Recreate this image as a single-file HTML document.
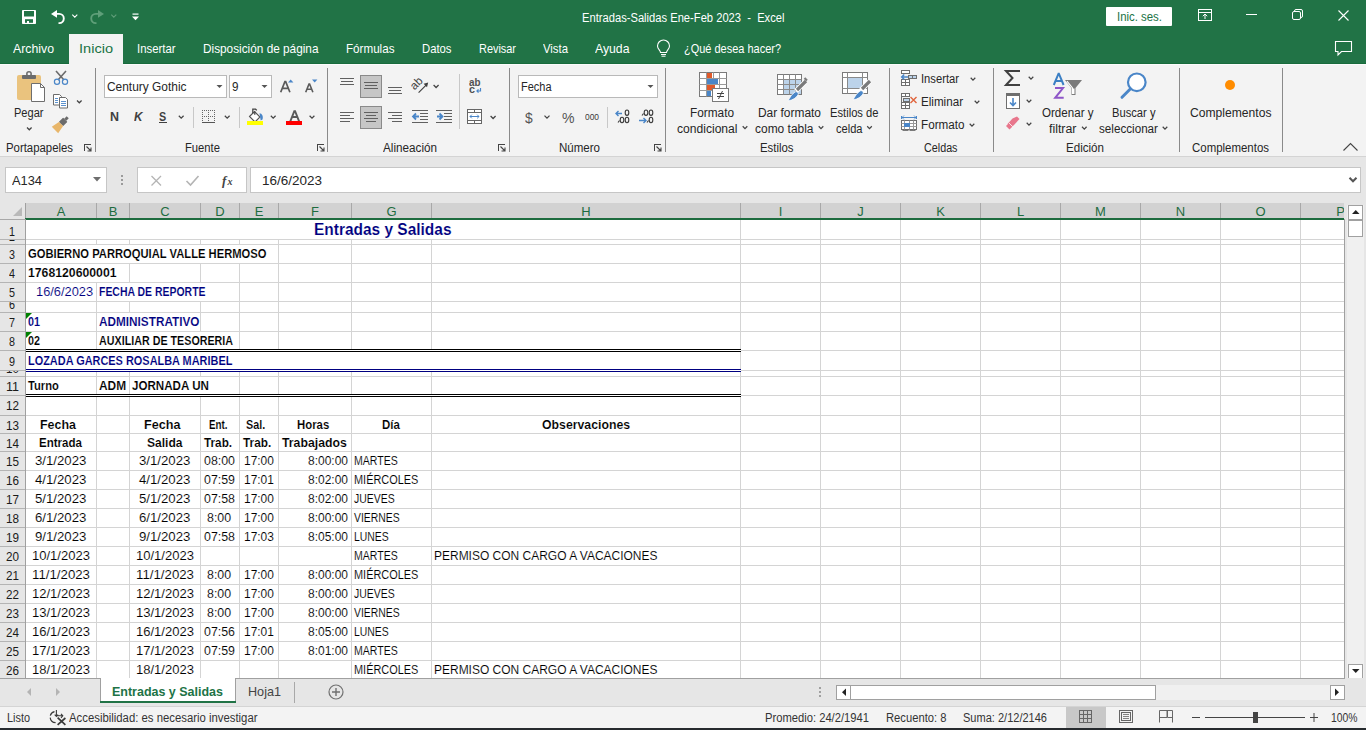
<!DOCTYPE html><html><head><meta charset="utf-8"><title>Excel</title><style>*{margin:0;padding:0;box-sizing:border-box}
html,body{width:1366px;height:730px;overflow:hidden;background:#f3f3f3;font-family:"Liberation Sans",sans-serif;position:relative}
.a{position:absolute}
.t{position:absolute;white-space:nowrap;line-height:1;transform-origin:0 0}
.s{position:absolute;overflow:visible}
</style></head><body><div class="a" style="left:0px;top:0px;width:1366px;height:63px;background:#217346"></div>
<div class="a" style="left:0px;top:63px;width:1366px;height:1px;background:#186b3c"></div>
<div class="a" style="left:0px;top:64px;width:1366px;height:1px;background:#fbfbfb"></div>
<div class="a" style="left:69px;top:34px;width:54px;height:31px;background:#f3f3f3"></div>
<svg class="s" style="left:0;top:0" width="1366" height="730" viewBox="0 0 1366 730"><rect x="22" y="10" width="14" height="14" rx="0.8" fill="#fff"/><rect x="24" y="11" width="10" height="5.5" fill="#217346"/><rect x="25" y="19.2" width="8" height="3.6" fill="#217346"/><rect x="27" y="21" width="2" height="2" fill="#fff"/></svg>
<svg class="s" style="left:0;top:0" width="1366" height="730" viewBox="0 0 1366 730"><path d="M51 13.9l6-3.8v7.6z" fill="#fff"/><path d="M56 13.9h3.2a4.6 4.6 0 0 1 0 9.2h-0.7" fill="none" stroke="#fff" stroke-width="1.9"/></svg>
<svg class="s" style="left:0;top:0" width="1366" height="730" viewBox="0 0 1366 730"><path d="M72.3 14.6l2.5 2.5 2.5-2.5" fill="none" stroke="#fff" stroke-width="1.1"/></svg>
<svg class="s" style="left:0;top:0" width="1366" height="730" viewBox="0 0 1366 730"><path d="M104 13.9l-6-3.8v7.6z" fill="#5f9f79"/><path d="M99 13.9h-3.2a4.6 4.6 0 0 0 0 9.2h0.7" fill="none" stroke="#5f9f79" stroke-width="1.9"/></svg>
<svg class="s" style="left:0;top:0" width="1366" height="730" viewBox="0 0 1366 730"><path d="M111.3 14.6l2.5 2.5 2.5-2.5" fill="none" stroke="#5f9d78" stroke-width="1.1"/></svg>
<svg class="s" style="left:132px;top:13px;" width="7" height="8" viewBox="0 0 7 8"><rect x="0.5" y="0.5" width="6" height="1.2" fill="#fff"/><path d="M0 3.5h7l-3.5 3.8z" fill="#fff"/></svg>
<div class="t" style="top:11.84px;font-size:12px;color:#fff;font-weight:normal;left:582.0px;transform:scaleX(0.9312);">Entradas-Salidas Ene-Feb 2023&nbsp;&nbsp;-&nbsp;&nbsp;Excel</div>
<div class="a" style="left:1106px;top:7px;width:66px;height:19px;background:#fff;border-radius:1px"></div>
<div class="t" style="top:10.84px;font-size:12px;color:#217346;font-weight:normal;left:1116.5px;transform:scaleX(0.9502);">Inic. ses.</div>
<svg class="s" style="left:1198px;top:9px;" width="14" height="12" viewBox="0 0 14 12"><rect x="0.5" y="0.5" width="13" height="11" fill="none" stroke="#fff" stroke-width="1"/><path d="M0.5 3.5h13" stroke="#fff"/><path d="M7 10V5M4.8 7.2L7 5l2.2 2.2" fill="none" stroke="#fff" stroke-width="1"/></svg>
<div class="a" style="left:1246px;top:14px;width:11px;height:1px;background:#fff"></div>
<svg class="s" style="left:1292px;top:9px;" width="11" height="11" viewBox="0 0 11 11"><rect x="0.5" y="2.5" width="8" height="8" rx="1.5" fill="none" stroke="#fff"/><path d="M2.5 2.5v-0.5a1.5 1.5 0 0 1 1.5-1.5h5a1.5 1.5 0 0 1 1.5 1.5v5a1.5 1.5 0 0 1-1.5 1.5h-0.5" fill="none" stroke="#fff"/></svg>
<svg class="s" style="left:1338px;top:10px;" width="11" height="11" viewBox="0 0 11 11"><path d="M0.5 0.5l10 10M10.5 0.5l-10 10" stroke="#fff" stroke-width="1.1"/></svg>
<div class="t" style="top:42.00px;font-size:13px;color:#fff;font-weight:normal;left:12.5px;transform:scaleX(0.9456);">Archivo</div>
<div class="t" style="top:42.00px;font-size:13px;color:#217346;font-weight:normal;left:78.5px;transform:scaleX(1.1199);">Inicio</div>
<div class="t" style="top:42.00px;font-size:13px;color:#fff;font-weight:normal;left:137.0px;transform:scaleX(0.8734);">Insertar</div>
<div class="t" style="top:42.00px;font-size:13px;color:#fff;font-weight:normal;left:203.0px;transform:scaleX(0.9080);">Disposición de página</div>
<div class="t" style="top:42.00px;font-size:13px;color:#fff;font-weight:normal;left:346.0px;transform:scaleX(0.8950);">Fórmulas</div>
<div class="t" style="top:42.00px;font-size:13px;color:#fff;font-weight:normal;left:422.0px;transform:scaleX(0.8684);">Datos</div>
<div class="t" style="top:42.00px;font-size:13px;color:#fff;font-weight:normal;left:479.0px;transform:scaleX(0.8394);">Revisar</div>
<div class="t" style="top:42.00px;font-size:13px;color:#fff;font-weight:normal;left:542.5px;transform:scaleX(0.8719);">Vista</div>
<div class="t" style="top:42.00px;font-size:13px;color:#fff;font-weight:normal;left:594.5px;transform:scaleX(0.9416);">Ayuda</div>
<svg class="s" style="left:656px;top:41px;" width="15" height="16" viewBox="0 0 15 16"><path d="M4.5 11.5c0-2-3-3.5-3-6.5a6 6 0 0 1 12 0c0 3-3 4.5-3 6.5z" fill="none" stroke="#fff" stroke-width="1.1"/><path d="M5 13.5h5M5.5 15.2h4" stroke="#fff" stroke-width="1"/></svg>
<div class="t" style="top:42.00px;font-size:13px;color:#fff;font-weight:normal;left:684.0px;transform:scaleX(0.8442);">¿Qué desea hacer?</div>
<svg class="s" style="left:1335px;top:41px;" width="17" height="15" viewBox="0 0 17 15"><path d="M0.5 0.5h16v10h-10l-3.5 3.5v-3.5h-2.5z" fill="none" stroke="#fff" stroke-width="1.1"/></svg>
<div class="a" style="left:0px;top:156px;width:1366px;height:1px;background:#d4d4d4"></div>
<div class="a" style="left:95px;top:68px;width:1px;height:84px;background:#8a8a8a"></div>
<div class="a" style="left:327px;top:68px;width:1px;height:84px;background:#8a8a8a"></div>
<div class="a" style="left:509px;top:68px;width:1px;height:84px;background:#8a8a8a"></div>
<div class="a" style="left:665px;top:68px;width:1px;height:84px;background:#8a8a8a"></div>
<div class="a" style="left:889px;top:68px;width:1px;height:84px;background:#8a8a8a"></div>
<div class="a" style="left:993px;top:68px;width:1px;height:84px;background:#8a8a8a"></div>
<div class="a" style="left:1179px;top:68px;width:1px;height:84px;background:#8a8a8a"></div>
<div class="a" style="left:1282px;top:68px;width:1px;height:84px;background:#8a8a8a"></div>
<div class="t" style="top:141.84px;font-size:12px;color:#262626;font-weight:normal;left:5.5px;transform:scaleX(0.9474);">Portapapeles</div>
<div class="t" style="top:141.84px;font-size:12px;color:#262626;font-weight:normal;left:185.0px;transform:scaleX(0.9368);">Fuente</div>
<div class="t" style="top:141.84px;font-size:12px;color:#262626;font-weight:normal;left:382.5px;transform:scaleX(0.9752);">Alineación</div>
<div class="t" style="top:141.84px;font-size:12px;color:#262626;font-weight:normal;left:558.5px;transform:scaleX(0.9605);">Número</div>
<div class="t" style="top:141.84px;font-size:12px;color:#262626;font-weight:normal;left:760.0px;transform:scaleX(0.9478);">Estilos</div>
<div class="t" style="top:141.84px;font-size:12px;color:#262626;font-weight:normal;left:924.0px;transform:scaleX(0.8967);">Celdas</div>
<div class="t" style="top:141.84px;font-size:12px;color:#262626;font-weight:normal;left:1066.0px;transform:scaleX(0.9655);">Edición</div>
<div class="t" style="top:141.84px;font-size:12px;color:#262626;font-weight:normal;left:1191.5px;transform:scaleX(0.9541);">Complementos</div>
<svg class="s" style="left:84px;top:144px;" width="8" height="8" viewBox="0 0 8 8"><path d="M0 0.5h7M0.5 0v7" stroke="#444" stroke-width="1"/><path d="M2.5 2.5l4.5 4.5M3.5 7h3.5v-3.5" fill="none" stroke="#444" stroke-width="1.1"/></svg>
<svg class="s" style="left:317px;top:144px;" width="8" height="8" viewBox="0 0 8 8"><path d="M0 0.5h7M0.5 0v7" stroke="#444" stroke-width="1"/><path d="M2.5 2.5l4.5 4.5M3.5 7h3.5v-3.5" fill="none" stroke="#444" stroke-width="1.1"/></svg>
<svg class="s" style="left:498px;top:144px;" width="8" height="8" viewBox="0 0 8 8"><path d="M0 0.5h7M0.5 0v7" stroke="#444" stroke-width="1"/><path d="M2.5 2.5l4.5 4.5M3.5 7h3.5v-3.5" fill="none" stroke="#444" stroke-width="1.1"/></svg>
<svg class="s" style="left:654px;top:144px;" width="8" height="8" viewBox="0 0 8 8"><path d="M0 0.5h7M0.5 0v7" stroke="#444" stroke-width="1"/><path d="M2.5 2.5l4.5 4.5M3.5 7h3.5v-3.5" fill="none" stroke="#444" stroke-width="1.1"/></svg>
<svg class="s" style="left:1343px;top:143px;" width="15" height="8" viewBox="0 0 15 8"><path d="M0.5 7.5l7-7 7 7" fill="none" stroke="#444" stroke-width="1.1"/></svg>
<svg class="s" style="left:0;top:0" width="1366" height="730" viewBox="0 0 1366 730">
<rect x="17" y="75" width="24" height="25" rx="2" fill="#eac37e"/>
<rect x="22" y="75" width="14" height="4" rx="1" fill="#6b6b6b"/>
<circle cx="29" cy="74" r="2.2" fill="none" stroke="#6b6b6b" stroke-width="1.5"/>
<path d="M31.5 83.5h9l4 4v14h-13z" fill="#fff" stroke="#6e6e6e" stroke-width="1"/>
<path d="M40.5 83.5v4h4" fill="none" stroke="#6e6e6e" stroke-width="1"/>
<path d="M56 71l8 9M66 71l-8 9" stroke="#6b6b6b" stroke-width="1.6"/>
<circle cx="57" cy="81.8" r="2.6" fill="none" stroke="#4a86c8" stroke-width="1.2"/>
<circle cx="65" cy="81.8" r="2.6" fill="none" stroke="#4a86c8" stroke-width="1.2"/>
<path d="M53.5 94.5h6l2 2v8.5h-8z" fill="#fff" stroke="#6b6b6b"/>
<path d="M59.5 97.5h6l2 2v8.5h-8z" fill="#fff" stroke="#6b6b6b"/>
<path d="M55 98.5h3M55 100.5h3M55 102.5h3M61 101.5h5M61 103.5h5M61 105.5h5" stroke="#4a86c8" stroke-width="0.9"/>
<path d="M77 100.5l2.3 2.3 2.3-2.3" fill="none" stroke="#444" stroke-width="1.25"/>
<path d="M27 127.5l2.3 2.3 2.3-2.3" fill="none" stroke="#444" stroke-width="1.25"/>
<g transform="rotate(-45 61 124)"><rect x="67" y="122.5" width="3.5" height="3" fill="#6b6b6b"/><rect x="61" y="121" width="6" height="6" rx="0.5" fill="#6b6b6b"/><path d="M61 121l-8.5-1.5v9l8.5-1.5z" fill="#e8b66a"/></g>
</svg>
<div class="t" style="top:106.84px;font-size:12px;color:#262626;font-weight:normal;left:14.0px;transform:scaleX(0.9210);">Pegar</div>
<div class="a" style="left:104px;top:75px;width:123px;height:23px;background:#fff;border:1px solid #b9b9b9"></div>
<div class="a" style="left:229px;top:75px;width:43px;height:23px;background:#fff;border:1px solid #b9b9b9"></div>
<div class="t" style="top:80.84px;font-size:12px;color:#262626;font-weight:normal;left:107.0px;transform:scaleX(0.9932);">Century Gothic</div>
<div class="t" style="top:80.84px;font-size:12px;color:#262626;font-weight:normal;left:231.5px;transform:scaleX(0.9720);">9</div>
<svg class="s" style="left:0;top:0" width="1366" height="730" viewBox="0 0 1366 730">
<path d="M216.5 85h6l-3 3z" fill="#555"/>
<path d="M261.5 85h6l-3 3z" fill="#555"/>
<path d="M280.7 92.2l4.2-10.6h0.8l4.2 10.6M282.4 88.4h5.8" fill="none" stroke="#5a5a5a" stroke-width="1.7"/>
<path d="M288 82.5l2.7-3 2.7 3z" fill="#4a86c8"/>
<path d="M305.7 92.2l3.3-8.2h0.6l3.3 8.2M307.1 89.2h4.5" fill="none" stroke="#5a5a5a" stroke-width="1.6"/>
<path d="M312 79.5h5.4l-2.7 3z" fill="#4a86c8"/>
<path d="M178.8 115.8l2.4 2.4 2.4-2.4" fill="none" stroke="#444" stroke-width="1.25"/>
<path d="M224.8 115.8l2.4 2.4 2.4-2.4" fill="none" stroke="#444" stroke-width="1.25"/>
<path d="M270.8 115.8l2.4 2.4 2.4-2.4" fill="none" stroke="#444" stroke-width="1.25"/>
<path d="M309.6 115.8l2.4 2.4 2.4-2.4" fill="none" stroke="#444" stroke-width="1.25"/>
<rect x="193" y="107" width="1" height="21" fill="#c8c8c8"/>
<rect x="239" y="107" width="1" height="21" fill="#c8c8c8"/>
<rect x="202" y="110" width="1" height="1" fill="#666"/><rect x="202" y="116" width="1" height="1" fill="#666"/><rect x="204" y="110" width="1" height="1" fill="#666"/><rect x="204" y="116" width="1" height="1" fill="#666"/><rect x="206" y="110" width="1" height="1" fill="#666"/><rect x="206" y="116" width="1" height="1" fill="#666"/><rect x="208" y="110" width="1" height="1" fill="#666"/><rect x="208" y="116" width="1" height="1" fill="#666"/><rect x="210" y="110" width="1" height="1" fill="#666"/><rect x="210" y="116" width="1" height="1" fill="#666"/><rect x="212" y="110" width="1" height="1" fill="#666"/><rect x="212" y="116" width="1" height="1" fill="#666"/><rect x="214" y="110" width="1" height="1" fill="#666"/><rect x="214" y="116" width="1" height="1" fill="#666"/><rect x="202" y="112" width="1" height="1" fill="#666"/><rect x="208" y="112" width="1" height="1" fill="#666"/><rect x="214" y="112" width="1" height="1" fill="#666"/><rect x="202" y="114" width="1" height="1" fill="#666"/><rect x="208" y="114" width="1" height="1" fill="#666"/><rect x="214" y="114" width="1" height="1" fill="#666"/><rect x="202" y="116" width="1" height="1" fill="#666"/><rect x="208" y="116" width="1" height="1" fill="#666"/><rect x="214" y="116" width="1" height="1" fill="#666"/><rect x="202" y="118" width="1" height="1" fill="#666"/><rect x="208" y="118" width="1" height="1" fill="#666"/><rect x="214" y="118" width="1" height="1" fill="#666"/><rect x="202" y="120" width="1" height="1" fill="#666"/><rect x="208" y="120" width="1" height="1" fill="#666"/><rect x="214" y="120" width="1" height="1" fill="#666"/>
<rect x="202" y="122" width="13" height="1" fill="#555"/>
<path d="M249.5 116.5l5-5 5.5 5.5-5 5z" fill="#fff" stroke="#555" stroke-width="1.1"/>
<path d="M252.8 113.5v-4.3h2.8l1.2 1.2M254.8 111.5v3.3" fill="none" stroke="#444" stroke-width="1.25"/>
<path d="M259.5 113.2c2.5 0.3 4 2.8 3 6.3l-1.8 1z" fill="#4a86c8"/>
<rect x="247" y="121" width="16" height="4" fill="#ffff00"/>
<path d="M290.3 121.3l4-10.2h0.8l4 10.2M292 117h5.4" fill="none" stroke="#5a5a5a" stroke-width="1.9"/>
<rect x="286" y="121" width="16" height="4" fill="#ff0000"/>
</svg>
<div class="t" style="top:110.84px;font-size:12px;color:#404040;font-weight:bold;left:110.0px;transform:scaleX(1.0378);">N</div>
<div class="t" style="top:110.84px;font-size:12px;color:#404040;font-weight:bold;left:133.5px;transform:scaleX(0.9802);font-style:italic">K</div>
<div class="t" style="top:110.84px;font-size:12px;color:#404040;font-weight:bold;left:158.8px;transform:scaleX(0.8982);">S</div>
<div class="a" style="left:159px;top:122px;width:8px;height:1px;background:#404040"></div>
<div class="a" style="left:360px;top:75px;width:22px;height:23px;background:#c6c6c6;border:1px solid #8a8a8a"></div>
<div class="a" style="left:360px;top:106px;width:22px;height:23px;background:#c6c6c6;border:1px solid #8a8a8a"></div>
<svg class="s" style="left:0;top:0" width="1366" height="730" viewBox="0 0 1366 730"><rect x="340" y="78" width="14" height="1" fill="#606060"/><rect x="341" y="81" width="12" height="1" fill="#606060"/><rect x="340" y="84" width="14" height="1" fill="#606060"/><rect x="364" y="82" width="14" height="1" fill="#606060"/><rect x="365" y="85" width="12" height="1" fill="#606060"/><rect x="364" y="88" width="14" height="1" fill="#606060"/><rect x="388" y="87" width="14" height="1" fill="#606060"/><rect x="389" y="90" width="12" height="1" fill="#606060"/><rect x="388" y="93" width="14" height="1" fill="#606060"/><rect x="340" y="112" width="14" height="1" fill="#606060"/><rect x="340" y="115" width="10" height="1" fill="#606060"/><rect x="340" y="118" width="14" height="1" fill="#606060"/><rect x="340" y="121" width="10" height="1" fill="#606060"/><rect x="364" y="112" width="14" height="1" fill="#606060"/><rect x="366" y="115" width="10" height="1" fill="#606060"/><rect x="364" y="118" width="14" height="1" fill="#606060"/><rect x="366" y="121" width="10" height="1" fill="#606060"/><rect x="388" y="112" width="14" height="1" fill="#606060"/><rect x="392" y="115" width="10" height="1" fill="#606060"/><rect x="388" y="118" width="14" height="1" fill="#606060"/><rect x="392" y="121" width="10" height="1" fill="#606060"/><rect x="412" y="110" width="16" height="1" fill="#606060"/><rect x="420" y="113" width="8" height="1" fill="#606060"/><rect x="420" y="116" width="8" height="1" fill="#606060"/><rect x="420" y="119" width="8" height="1" fill="#606060"/><rect x="412" y="122" width="16" height="1" fill="#606060"/><rect x="436" y="110" width="16" height="1" fill="#606060"/><rect x="444" y="113" width="8" height="1" fill="#606060"/><rect x="444" y="116" width="8" height="1" fill="#606060"/><rect x="444" y="119" width="8" height="1" fill="#606060"/><rect x="436" y="122" width="16" height="1" fill="#606060"/><path d="M419 116.5h-5M416 113.5l-3 3 3 3" fill="none" stroke="#4a86c8" stroke-width="1.8"/><path d="M437 116.5h5M439.5 113.5l3 3-3 3" fill="none" stroke="#4a86c8" stroke-width="1.8"/><path d="M418.6 92.6l7.5-7.5" stroke="#404040" stroke-width="1.2"/><path d="M428.2 82.6l-1.2 4.6-3.4-3.4z" fill="#404040"/><path d="M433.6 85l2.5 2.5 2.5-2.5" fill="none" stroke="#444" stroke-width="1.25"/><rect x="459" y="74" width="1" height="55" fill="#c8c8c8"/><path d="M480.5 88v3h-3.5M478.5 89.3l-1.6 1.7 1.6 1.7" fill="none" stroke="#4a86c8" stroke-width="1.2"/><rect x="467.5" y="109.5" width="14" height="14" fill="#fff" stroke="#666"/><path d="M467.5 112.5h14M467.5 120.5h14M474.5 109.5v3M474.5 120.5v3" stroke="#666"/><path d="M470 116.5h9M471.8 114.7l-1.8 1.8 1.8 1.8M477.2 114.7l1.8 1.8-1.8 1.8" fill="none" stroke="#4a86c8" stroke-width="1"/><path d="M490.6 116l2.5 2.5 2.5-2.5" fill="none" stroke="#444" stroke-width="1.25"/></svg>
<div class="t" style="top:76.69px;font-size:11px;color:#505050;font-weight:bold;left:468.5px;transform:scaleX(0.8954);">ab</div>
<div class="t" style="top:83.69px;font-size:11px;color:#505050;font-weight:bold;left:468.5px;transform:scaleX(0.9796);">c</div>
<svg class="s" style="left:0;top:0" width="1366" height="730" viewBox="0 0 1366 730"><text x="0" y="0" font-family="Liberation Sans" font-size="11.5" fill="#404040" transform="translate(414.6,90.6) rotate(-45)">ab</text></svg>
<div class="a" style="left:518px;top:75px;width:140px;height:23px;background:#fff;border:1px solid #b9b9b9"></div>
<div class="t" style="top:80.84px;font-size:12px;color:#262626;font-weight:normal;left:521.0px;transform:scaleX(0.9143);">Fecha</div>
<svg class="s" style="left:0;top:0" width="1366" height="730" viewBox="0 0 1366 730"><path d="M647.5 85h6l-3 3z" fill="#555"/><path d="M544.5 115.6l2.5 2.5 2.5-2.5" fill="none" stroke="#444" stroke-width="1.25"/><rect x="607" y="107" width="1" height="21" fill="#c8c8c8"/><path d="M622 113.5h-6M618.5 111l-2.5 2.5 2.5 2.5" fill="none" stroke="#4a86c8" stroke-width="1.4"/><path d="M639 120.5h6.5M643.5 118l2.5 2.5-2.5 2.5" fill="none" stroke="#4a86c8" stroke-width="1.4"/></svg>
<div class="t" style="top:110.30px;font-size:15px;color:#555;font-weight:normal;left:525.3px;transform:scaleX(0.9228);">$</div>
<div class="t" style="top:111.15px;font-size:14px;color:#555;font-weight:normal;left:562.0px;transform:scaleX(1.0038);">%</div>
<div class="t" style="top:111.96px;font-size:9.5px;color:#3a3a3a;font-weight:normal;left:584.5px;transform:scaleX(0.8828);">000</div>
<svg class="s" style="left:0;top:0" width="1366" height="730" viewBox="0 0 1366 730"><ellipse cx="627" cy="112.7" rx="1.8" ry="2.7" fill="none" stroke="#3a3a3a" stroke-width="1.1"/><ellipse cx="622" cy="120" rx="1.8" ry="2.7" fill="none" stroke="#3a3a3a" stroke-width="1.1"/><ellipse cx="627" cy="120" rx="1.8" ry="2.7" fill="none" stroke="#3a3a3a" stroke-width="1.1"/><path d="M619.5 120.5l-1.5 2" stroke="#3a3a3a" stroke-width="1.1"/><ellipse cx="646" cy="112.7" rx="1.8" ry="2.7" fill="none" stroke="#3a3a3a" stroke-width="1.1"/><ellipse cx="651" cy="112.7" rx="1.8" ry="2.7" fill="none" stroke="#3a3a3a" stroke-width="1.1"/><path d="M643.5 113.5l-1.5 2" stroke="#3a3a3a" stroke-width="1.1"/><ellipse cx="651" cy="120" rx="1.8" ry="2.7" fill="none" stroke="#3a3a3a" stroke-width="1.1"/><path d="M648.5 120.5l-1.5 2" stroke="#3a3a3a" stroke-width="1.1"/></svg>
<svg class="s" style="left:0;top:0" width="1366" height="730" viewBox="0 0 1366 730"><rect x="699.5" y="72.5" width="27" height="24" fill="#fff" stroke="#7a7a7a"/><path d="M699.5 78.5h27M699.5 84.5h27M699.5 90.5h27M706.5 72.5v24M713.5 72.5v24M719.5 72.5v24" stroke="#9a9a9a" stroke-width="1"/><rect x="707" y="73" width="5" height="5" fill="#e05a2b"/><rect x="707" y="79" width="11" height="5" fill="#4a86c8"/><rect x="707" y="85" width="8" height="5" fill="#e05a2b"/><rect x="707" y="91" width="4" height="5" fill="#4a86c8"/><rect x="712.5" y="88.5" width="16" height="13" fill="#fff" stroke="#7a7a7a"/><path d="M717 93.5h7M717 96.5h7M722.5 91l-4 8" stroke="#444" stroke-width="1"/><rect x="777.5" y="74.5" width="24" height="20" fill="#fff" stroke="#7a7a7a"/><rect x="783" y="80" width="18" height="14" fill="#bcd3ea"/><path d="M777.5 79.5h24M777.5 84.5h24M777.5 89.5h24M783.5 74.5v20M789.5 74.5v20M795.5 74.5v20" stroke="#8a8a8a" stroke-width="1"/><path d="M796 91l9-9" stroke="#fff" stroke-width="5"/><path d="M797 90l9-9" stroke="#7a7a7a" stroke-width="3.2"/><path d="M805 80l1.5-1.5" stroke="#7a7a7a" stroke-width="3.5"/><path d="M788 101c2-4 4-7 7-9 2-1 4 1 3 3-2 3-5 5-10 6z" fill="#4a86c8" stroke="#fff" stroke-width="0.8"/><rect x="842.5" y="72.5" width="25" height="21" fill="#fff" stroke="#7a7a7a"/><rect x="848" y="78" width="14" height="10" fill="#bcd3ea"/><path d="M842.5 77.5h25M842.5 88.5h25M847.5 72.5v21M862.5 72.5v21" stroke="#8a8a8a" stroke-width="1"/><path d="M861 90l9-9" stroke="#fff" stroke-width="5"/><path d="M862 89l8-8" stroke="#7a7a7a" stroke-width="3.2"/><path d="M853 100c2-4 4-7 7-9 2-1 4 1 3 3-2 3-5 5-10 6z" fill="#4a86c8" stroke="#fff" stroke-width="0.8"/><path d="M742.7 126.3l2.3 2.3 2.3-2.3" fill="none" stroke="#444" stroke-width="1.25"/><path d="M818.7 126.3l2.3 2.3 2.3-2.3" fill="none" stroke="#444" stroke-width="1.25"/><path d="M867.2 126.3l2.3 2.3 2.3-2.3" fill="none" stroke="#444" stroke-width="1.25"/></svg>
<div class="t" style="top:106.84px;font-size:12px;color:#262626;font-weight:normal;left:690.0px;transform:scaleX(0.9846);">Formato</div>
<div class="t" style="top:122.84px;font-size:12px;color:#262626;font-weight:normal;left:676.5px;transform:scaleX(1.0075);">condicional</div>
<div class="t" style="top:106.84px;font-size:12px;color:#262626;font-weight:normal;left:758.0px;transform:scaleX(0.9943);">Dar formato</div>
<div class="t" style="top:122.84px;font-size:12px;color:#262626;font-weight:normal;left:754.5px;transform:scaleX(0.9965);">como tabla</div>
<div class="t" style="top:106.84px;font-size:12px;color:#262626;font-weight:normal;left:830.0px;transform:scaleX(0.9321);">Estilos de</div>
<div class="t" style="top:122.84px;font-size:12px;color:#262626;font-weight:normal;left:835.5px;transform:scaleX(0.9237);">celda</div>
<svg class="s" style="left:0;top:0" width="1366" height="730" viewBox="0 0 1366 730"><rect x="901.5" y="70.5" width="8" height="3" fill="#fff" stroke="#6e6e6e"/><rect x="901.5" y="79.5" width="8" height="3" fill="#fff" stroke="#6e6e6e"/><rect x="901.5" y="82.5" width="8" height="3" fill="#fff" stroke="#6e6e6e"/><path d="M905.5 79.5v6" stroke="#6e6e6e"/><rect x="908.5" y="75.5" width="8" height="3" fill="#bcd3ea" stroke="#6e6e6e"/><path d="M912.5 75.5v3" stroke="#6e6e6e"/><path d="M908 77h-6M904.2 74.5l-2.5 2.5 2.5 2.5" fill="none" stroke="#4a86c8" stroke-width="1.5"/><rect x="901.5" y="93.5" width="8" height="3" fill="#fff" stroke="#6e6e6e"/><path d="M905.5 93.5v3" stroke="#6e6e6e"/><rect x="901.5" y="102.5" width="8" height="3" fill="#fff" stroke="#6e6e6e"/><rect x="901.5" y="105.5" width="8" height="3" fill="#fff" stroke="#6e6e6e"/><path d="M905.5 102.5v6" stroke="#6e6e6e"/><rect x="903.5" y="98.5" width="6" height="3" fill="#bcd3ea" stroke="#6e6e6e"/><path d="M901.5 96.5v6" stroke="#6e6e6e"/><path d="M910.5 97l6 6M916.5 97l-6 6" stroke="#e0643c" stroke-width="1.4"/><path d="M901.5 116v3M916.5 116v3M902 117.5h14" stroke="#4a86c8" stroke-width="1"/><path d="M904 115.5l-2 2 2 2M914 115.5l2 2-2 2" fill="none" stroke="#4a86c8" stroke-width="0.8"/><rect x="901.5" y="120.5" width="15" height="9" fill="#fff" stroke="#6e6e6e"/><path d="M901.5 123.5h15M901.5 126.5h15M904.5 120.5v9M909.5 120.5v9M913.5 120.5v9" stroke="#9a9a9a"/><rect x="904" y="123" width="6" height="4" fill="#4a86c8"/><path d="M902.5 130.5h6M909.5 130.5h6" stroke="#7a7a7a" stroke-width="1.2"/><path d="M970.7 77.8l2.3 2.3 2.3-2.3" fill="none" stroke="#444" stroke-width="1.25"/><path d="M974.7 100.8l2.3 2.3 2.3-2.3" fill="none" stroke="#444" stroke-width="1.25"/><path d="M969.7 123.8l2.3 2.3 2.3-2.3" fill="none" stroke="#444" stroke-width="1.25"/></svg>
<div class="t" style="top:72.84px;font-size:12px;color:#262626;font-weight:normal;left:920.5px;transform:scaleX(0.9339);">Insertar</div>
<div class="t" style="top:95.84px;font-size:12px;color:#262626;font-weight:normal;left:920.5px;transform:scaleX(0.9690);">Eliminar</div>
<div class="t" style="top:118.84px;font-size:12px;color:#262626;font-weight:normal;left:920.5px;transform:scaleX(0.9734);">Formato</div>
<svg class="s" style="left:0;top:0" width="1366" height="730" viewBox="0 0 1366 730"><path d="M1020 71h-14l6.5 7-6.5 7h14" fill="none" stroke="#404040" stroke-width="2"/><rect x="1006.5" y="93.5" width="13" height="15" fill="#fff" stroke="#6e6e6e"/><rect x="1006" y="93" width="14" height="3" fill="#6e6e6e"/><path d="M1013 98v7M1010 102.5l3 3 3-3" fill="none" stroke="#4a86c8" stroke-width="1.6"/><path d="M1012.5 118.5l4.5-2 2.5 2.5-6 6.5-3 1.5-3-3z" fill="#e8768c"/><path d="M1006 126l3-3 3.5 3.5-3 3z" fill="#e8768c"/><path d="M1009 123l3.5 3.5" stroke="#fff" stroke-width="0.8"/><path d="M1028.7 76.8l2.3 2.3 2.3-2.3" fill="none" stroke="#444" stroke-width="1.25"/><path d="M1026.7 99.8l2.3 2.3 2.3-2.3" fill="none" stroke="#444" stroke-width="1.25"/><path d="M1026.7 122.8l2.3 2.3 2.3-2.3" fill="none" stroke="#444" stroke-width="1.25"/><path d="M1082.0 126.8l2.3 2.3 2.3-2.3" fill="none" stroke="#444" stroke-width="1.25"/><path d="M1162.7 126.8l2.3 2.3 2.3-2.3" fill="none" stroke="#444" stroke-width="1.25"/><path d="M1065 80l-6 4.5v9" fill="none" stroke="none"/><path d="M1065 80h17l-6.5 8v7h-4v-7z" fill="#7a7a7a"/><path d="M1067 81.2l5.5 6.8v6" fill="none" stroke="#fff" stroke-width="1.1"/><rect x="1072.5" y="88.5" width="2" height="5.5" fill="#fff"/><path d="M1053.8 85l4.7-11.3h0.4l4.7 11.3M1055.6 81h6.2" fill="none" stroke="#3b7fc4" stroke-width="2"/><path d="M1055 88h8l-7.8 9.8h8.5" fill="none" stroke="#8e56c8" stroke-width="2"/><circle cx="1136.8" cy="82.3" r="8.8" fill="#fff" stroke="#4a86c8" stroke-width="2.2"/><path d="M1130.5 88.8l-8.5 8.5" stroke="#4a86c8" stroke-width="3" stroke-linecap="round"/><circle cx="1230" cy="85" r="5" fill="#ff8c00"/></svg>
<div class="t" style="top:106.84px;font-size:12px;color:#262626;font-weight:normal;left:1042.0px;transform:scaleX(0.9652);">Ordenar y</div>
<div class="t" style="top:122.84px;font-size:12px;color:#262626;font-weight:normal;left:1049.0px;transform:scaleX(1.0310);">filtrar</div>
<div class="t" style="top:106.84px;font-size:12px;color:#262626;font-weight:normal;left:1112.0px;transform:scaleX(0.9317);">Buscar y</div>
<div class="t" style="top:122.84px;font-size:12px;color:#262626;font-weight:normal;left:1098.5px;transform:scaleX(0.9719);">seleccionar</div>
<div class="t" style="top:106.84px;font-size:12px;color:#262626;font-weight:normal;left:1190.0px;transform:scaleX(1.0099);">Complementos</div>
<div class="a" style="left:0px;top:157px;width:1366px;height:46px;background:#e6e6e6"></div>
<div class="a" style="left:5px;top:167px;width:102px;height:26px;background:#fff;border:1px solid #c6c6c6"></div>
<div class="t" style="top:174.00px;font-size:13px;color:#262626;font-weight:normal;left:11.5px;transform:scaleX(0.9877);">A134</div>
<div class="a" style="left:137px;top:167px;width:110px;height:26px;background:#fff;border:1px solid #c6c6c6"></div>
<div class="a" style="left:250px;top:167px;width:1111px;height:26px;background:#fff;border:1px solid #c6c6c6"></div>
<div class="t" style="top:174.00px;font-size:13px;color:#262626;font-weight:normal;left:262.0px;transform:scaleX(1.0373);">16/6/2023</div>
<svg class="s" style="left:0;top:0" width="1366" height="730" viewBox="0 0 1366 730"><path d="M93 177h8l-4 4.5z" fill="#6e6e6e"/><rect x="121" y="175" width="2" height="2" fill="#9a9a9a"/><rect x="121" y="179" width="2" height="2" fill="#9a9a9a"/><rect x="121" y="183" width="2" height="2" fill="#9a9a9a"/><path d="M151.5 176l9.5 9.5M161 176l-9.5 9.5" stroke="#b4b4b4" stroke-width="1.3"/><path d="M186.5 181l4 4 8-9" fill="none" stroke="#b4b4b4" stroke-width="1.6"/><path d="M1349.5 177.8l3.5 3.5 3.5-3.5" fill="none" stroke="#555" stroke-width="2"/></svg>
<svg class="s" style="left:0;top:0" width="1366" height="730" viewBox="0 0 1366 730"><text x="222" y="185" font-family="Liberation Serif" font-style="italic" font-weight="bold" font-size="13" fill="#444">f</text><text x="227.5" y="185" font-family="Liberation Serif" font-style="italic" font-weight="bold" font-size="10" fill="#444">x</text></svg>
<div class="a" style="left:26px;top:220px;width:1318px;height:458px;background:#fff"></div>
<svg class="s" style="left:0;top:0" width="1366" height="730" viewBox="0 0 1366 730"><rect x="26" y="239" width="1318" height="1" fill="#d4d4d4"/><rect x="26" y="244" width="1318" height="1" fill="#d4d4d4"/><rect x="26" y="263" width="1318" height="1" fill="#d4d4d4"/><rect x="26" y="282" width="1318" height="1" fill="#d4d4d4"/><rect x="26" y="301" width="1318" height="1" fill="#d4d4d4"/><rect x="26" y="312" width="1318" height="1" fill="#d4d4d4"/><rect x="26" y="331" width="1318" height="1" fill="#d4d4d4"/><rect x="26" y="350" width="1318" height="1" fill="#d4d4d4"/><rect x="26" y="370" width="1318" height="1" fill="#d4d4d4"/><rect x="26" y="376" width="1318" height="1" fill="#d4d4d4"/><rect x="26" y="395" width="1318" height="1" fill="#d4d4d4"/><rect x="26" y="415" width="1318" height="1" fill="#d4d4d4"/><rect x="26" y="433" width="1318" height="1" fill="#d4d4d4"/><rect x="26" y="451" width="1318" height="1" fill="#d4d4d4"/><rect x="26" y="470" width="1318" height="1" fill="#d4d4d4"/><rect x="26" y="489" width="1318" height="1" fill="#d4d4d4"/><rect x="26" y="508" width="1318" height="1" fill="#d4d4d4"/><rect x="26" y="527" width="1318" height="1" fill="#d4d4d4"/><rect x="26" y="546" width="1318" height="1" fill="#d4d4d4"/><rect x="26" y="565" width="1318" height="1" fill="#d4d4d4"/><rect x="26" y="584" width="1318" height="1" fill="#d4d4d4"/><rect x="26" y="603" width="1318" height="1" fill="#d4d4d4"/><rect x="26" y="622" width="1318" height="1" fill="#d4d4d4"/><rect x="26" y="641" width="1318" height="1" fill="#d4d4d4"/><rect x="26" y="660" width="1318" height="1" fill="#d4d4d4"/><rect x="96" y="220" width="1" height="458" fill="#d4d4d4"/><rect x="129" y="220" width="1" height="458" fill="#d4d4d4"/><rect x="200" y="220" width="1" height="458" fill="#d4d4d4"/><rect x="239" y="220" width="1" height="458" fill="#d4d4d4"/><rect x="278" y="220" width="1" height="458" fill="#d4d4d4"/><rect x="351" y="220" width="1" height="458" fill="#d4d4d4"/><rect x="431" y="220" width="1" height="458" fill="#d4d4d4"/><rect x="740" y="220" width="1" height="458" fill="#d4d4d4"/><rect x="820" y="220" width="1" height="458" fill="#d4d4d4"/><rect x="900" y="220" width="1" height="458" fill="#d4d4d4"/><rect x="980" y="220" width="1" height="458" fill="#d4d4d4"/><rect x="1060" y="220" width="1" height="458" fill="#d4d4d4"/><rect x="1140" y="220" width="1" height="458" fill="#d4d4d4"/><rect x="1220" y="220" width="1" height="458" fill="#d4d4d4"/><rect x="1300" y="220" width="1" height="458" fill="#d4d4d4"/><rect x="96" y="220" width="1" height="19" fill="#fff"/><rect x="129" y="220" width="1" height="19" fill="#fff"/><rect x="200" y="220" width="1" height="19" fill="#fff"/><rect x="239" y="220" width="1" height="19" fill="#fff"/><rect x="278" y="220" width="1" height="19" fill="#fff"/><rect x="351" y="220" width="1" height="19" fill="#fff"/><rect x="431" y="220" width="1" height="19" fill="#fff"/><rect x="96" y="245" width="1" height="18" fill="#fff"/><rect x="129" y="245" width="1" height="18" fill="#fff"/><rect x="200" y="245" width="1" height="18" fill="#fff"/><rect x="239" y="245" width="1" height="18" fill="#fff"/><rect x="96" y="264" width="1" height="18" fill="#fff"/><rect x="129" y="283" width="1" height="18" fill="#fff"/><rect x="200" y="283" width="1" height="18" fill="#fff"/><rect x="129" y="313" width="1" height="18" fill="#fff"/><rect x="129" y="332" width="1" height="18" fill="#fff"/><rect x="200" y="332" width="1" height="18" fill="#fff"/><rect x="96" y="351" width="1" height="19" fill="#fff"/><rect x="129" y="351" width="1" height="19" fill="#fff"/><rect x="200" y="351" width="1" height="19" fill="#fff"/><rect x="239" y="351" width="1" height="19" fill="#fff"/><rect x="278" y="351" width="1" height="19" fill="#fff"/><rect x="351" y="351" width="1" height="19" fill="#fff"/><rect x="431" y="351" width="1" height="19" fill="#fff"/><rect x="200" y="377" width="1" height="18" fill="#fff"/><rect x="26" y="349" width="715" height="1" fill="#000"/><rect x="26" y="350" width="715" height="1" fill="#fff"/><rect x="26" y="351" width="715" height="1" fill="#000"/><rect x="26" y="369" width="715" height="1" fill="#000080"/><rect x="26" y="370" width="715" height="1" fill="#fff"/><rect x="26" y="371" width="715" height="1" fill="#000080"/><rect x="26" y="394" width="715" height="1" fill="#000"/><rect x="26" y="395" width="715" height="1" fill="#fff"/><rect x="26" y="396" width="715" height="1" fill="#000"/><path d="M26 313h6l-6 6z" fill="#008000"/><path d="M26 332h6l-6 6z" fill="#008000"/><rect x="1344" y="219" width="1" height="460" fill="#a0a0a0"/></svg>
<div class="a" style="left:0px;top:203px;width:25px;height:16px;background:#e6e6e6"></div>
<div class="a" style="left:25px;top:203px;width:1319px;height:15px;background:#d2d2d2"></div>
<svg class="s" style="left:0;top:0" width="1366" height="730" viewBox="0 0 1366 730"><path d="M22 207v9h-9z" fill="#b9b9b9"/><rect x="25" y="203" width="1" height="16" fill="#a0a0a0"/><rect x="96" y="203" width="1" height="15" fill="#a8a8a8"/><rect x="129" y="203" width="1" height="15" fill="#a8a8a8"/><rect x="200" y="203" width="1" height="15" fill="#a8a8a8"/><rect x="239" y="203" width="1" height="15" fill="#a8a8a8"/><rect x="278" y="203" width="1" height="15" fill="#a8a8a8"/><rect x="351" y="203" width="1" height="15" fill="#a8a8a8"/><rect x="431" y="203" width="1" height="15" fill="#a8a8a8"/><rect x="740" y="203" width="1" height="15" fill="#a8a8a8"/><rect x="820" y="203" width="1" height="15" fill="#a8a8a8"/><rect x="900" y="203" width="1" height="15" fill="#a8a8a8"/><rect x="980" y="203" width="1" height="15" fill="#a8a8a8"/><rect x="1060" y="203" width="1" height="15" fill="#a8a8a8"/><rect x="1140" y="203" width="1" height="15" fill="#a8a8a8"/><rect x="1220" y="203" width="1" height="15" fill="#a8a8a8"/><rect x="1300" y="203" width="1" height="15" fill="#a8a8a8"/><rect x="25" y="218" width="1319" height="2" fill="#1e6c3f"/></svg>
<div class="t" style="top:205.00px;font-size:13px;color:#1e6c3f;font-weight:normal;left:56.66px;">A</div>
<div class="t" style="top:205.00px;font-size:13px;color:#1e6c3f;font-weight:normal;left:108.66px;">B</div>
<div class="t" style="top:205.00px;font-size:13px;color:#1e6c3f;font-weight:normal;left:160.30px;">C</div>
<div class="t" style="top:205.00px;font-size:13px;color:#1e6c3f;font-weight:normal;left:215.30px;">D</div>
<div class="t" style="top:205.00px;font-size:13px;color:#1e6c3f;font-weight:normal;left:254.66px;">E</div>
<div class="t" style="top:205.00px;font-size:13px;color:#1e6c3f;font-weight:normal;left:311.02px;">F</div>
<div class="t" style="top:205.00px;font-size:13px;color:#1e6c3f;font-weight:normal;left:386.44px;">G</div>
<div class="t" style="top:205.00px;font-size:13px;color:#1e6c3f;font-weight:normal;left:581.30px;">H</div>
<div class="t" style="top:205.00px;font-size:13px;color:#1e6c3f;font-weight:normal;left:778.69px;">I</div>
<div class="t" style="top:205.00px;font-size:13px;color:#1e6c3f;font-weight:normal;left:857.25px;">J</div>
<div class="t" style="top:205.00px;font-size:13px;color:#1e6c3f;font-weight:normal;left:936.16px;">K</div>
<div class="t" style="top:205.00px;font-size:13px;color:#1e6c3f;font-weight:normal;left:1016.88px;">L</div>
<div class="t" style="top:205.00px;font-size:13px;color:#1e6c3f;font-weight:normal;left:1095.08px;">M</div>
<div class="t" style="top:205.00px;font-size:13px;color:#1e6c3f;font-weight:normal;left:1175.80px;">N</div>
<div class="t" style="top:205.00px;font-size:13px;color:#1e6c3f;font-weight:normal;left:1255.44px;">O</div>
<div class="t" style="top:205.00px;font-size:13px;color:#1e6c3f;font-weight:normal;left:1336.16px;">P</div>
<div class="a" style="left:1344px;top:203px;width:22px;height:16px;background:#e6e6e6"></div>
<div class="a" style="left:0px;top:219px;width:25px;height:459px;background:#e6e6e6"></div>
<svg class="s" style="left:0;top:0" width="1366" height="730" viewBox="0 0 1366 730"><rect x="25" y="219" width="1" height="459" fill="#a0a0a0"/><rect x="0" y="219" width="25" height="1" fill="#a8a8a8"/><rect x="0" y="239" width="25" height="1" fill="#b4b4b4"/><rect x="0" y="244" width="25" height="1" fill="#b4b4b4"/><rect x="0" y="263" width="25" height="1" fill="#b4b4b4"/><rect x="0" y="282" width="25" height="1" fill="#b4b4b4"/><rect x="0" y="301" width="25" height="1" fill="#b4b4b4"/><rect x="0" y="312" width="25" height="1" fill="#b4b4b4"/><rect x="0" y="331" width="25" height="1" fill="#b4b4b4"/><rect x="0" y="350" width="25" height="1" fill="#b4b4b4"/><rect x="0" y="370" width="25" height="1" fill="#b4b4b4"/><rect x="0" y="376" width="25" height="1" fill="#b4b4b4"/><rect x="0" y="395" width="25" height="1" fill="#b4b4b4"/><rect x="0" y="415" width="25" height="1" fill="#b4b4b4"/><rect x="0" y="433" width="25" height="1" fill="#b4b4b4"/><rect x="0" y="451" width="25" height="1" fill="#b4b4b4"/><rect x="0" y="470" width="25" height="1" fill="#b4b4b4"/><rect x="0" y="489" width="25" height="1" fill="#b4b4b4"/><rect x="0" y="508" width="25" height="1" fill="#b4b4b4"/><rect x="0" y="527" width="25" height="1" fill="#b4b4b4"/><rect x="0" y="546" width="25" height="1" fill="#b4b4b4"/><rect x="0" y="565" width="25" height="1" fill="#b4b4b4"/><rect x="0" y="584" width="25" height="1" fill="#b4b4b4"/><rect x="0" y="603" width="25" height="1" fill="#b4b4b4"/><rect x="0" y="622" width="25" height="1" fill="#b4b4b4"/><rect x="0" y="641" width="25" height="1" fill="#b4b4b4"/><rect x="0" y="660" width="25" height="1" fill="#b4b4b4"/></svg>
<div class="a" style="left:0px;top:220px;width:25px;height:19px;overflow:hidden"><div class="a" style="left:0px;top:-220px;width:1366px;height:730px"><div class="t" style="top:224.57px;font-size:13.5px;color:#1a1a1a;font-weight:normal;left:9.0px;transform:scaleX(0.7983);">1</div></div></div>
<div class="a" style="left:0px;top:240px;width:25px;height:4px;overflow:hidden"><div class="a" style="left:0px;top:-240px;width:1366px;height:730px"><div class="t" style="top:229.57px;font-size:13.5px;color:#1a1a1a;font-weight:normal;left:9.0px;transform:scaleX(0.7983);">2</div></div></div>
<div class="a" style="left:0px;top:245px;width:25px;height:18px;overflow:hidden"><div class="a" style="left:0px;top:-245px;width:1366px;height:730px"><div class="t" style="top:247.57px;font-size:13.5px;color:#1a1a1a;font-weight:normal;left:9.0px;transform:scaleX(0.7983);">3</div></div></div>
<div class="a" style="left:0px;top:264px;width:25px;height:18px;overflow:hidden"><div class="a" style="left:0px;top:-264px;width:1366px;height:730px"><div class="t" style="top:266.57px;font-size:13.5px;color:#1a1a1a;font-weight:normal;left:9.0px;transform:scaleX(0.7983);">4</div></div></div>
<div class="a" style="left:0px;top:283px;width:25px;height:18px;overflow:hidden"><div class="a" style="left:0px;top:-283px;width:1366px;height:730px"><div class="t" style="top:285.57px;font-size:13.5px;color:#1a1a1a;font-weight:normal;left:9.0px;transform:scaleX(0.7983);">5</div></div></div>
<div class="a" style="left:0px;top:302px;width:25px;height:10px;overflow:hidden"><div class="a" style="left:0px;top:-302px;width:1366px;height:730px"><div class="t" style="top:297.57px;font-size:13.5px;color:#1a1a1a;font-weight:normal;left:9.0px;transform:scaleX(0.7983);">6</div></div></div>
<div class="a" style="left:0px;top:313px;width:25px;height:18px;overflow:hidden"><div class="a" style="left:0px;top:-313px;width:1366px;height:730px"><div class="t" style="top:315.57px;font-size:13.5px;color:#1a1a1a;font-weight:normal;left:9.0px;transform:scaleX(0.7983);">7</div></div></div>
<div class="a" style="left:0px;top:332px;width:25px;height:18px;overflow:hidden"><div class="a" style="left:0px;top:-332px;width:1366px;height:730px"><div class="t" style="top:334.57px;font-size:13.5px;color:#1a1a1a;font-weight:normal;left:9.0px;transform:scaleX(0.7983);">8</div></div></div>
<div class="a" style="left:0px;top:351px;width:25px;height:19px;overflow:hidden"><div class="a" style="left:0px;top:-351px;width:1366px;height:730px"><div class="t" style="top:354.57px;font-size:13.5px;color:#1a1a1a;font-weight:normal;left:9.0px;transform:scaleX(0.7983);">9</div></div></div>
<div class="a" style="left:0px;top:371px;width:25px;height:5px;overflow:hidden"><div class="a" style="left:0px;top:-371px;width:1366px;height:730px"><div class="t" style="top:361.57px;font-size:13.5px;color:#1a1a1a;font-weight:normal;left:6.0px;transform:scaleX(0.8649);">10</div></div></div>
<div class="a" style="left:0px;top:377px;width:25px;height:18px;overflow:hidden"><div class="a" style="left:0px;top:-377px;width:1366px;height:730px"><div class="t" style="top:379.57px;font-size:13.5px;color:#1a1a1a;font-weight:normal;left:6.0px;transform:scaleX(0.9275);">11</div></div></div>
<div class="a" style="left:0px;top:396px;width:25px;height:19px;overflow:hidden"><div class="a" style="left:0px;top:-396px;width:1366px;height:730px"><div class="t" style="top:398.57px;font-size:13.5px;color:#1a1a1a;font-weight:normal;left:6.0px;transform:scaleX(0.8649);">12</div></div></div>
<div class="a" style="left:0px;top:416px;width:25px;height:17px;overflow:hidden"><div class="a" style="left:0px;top:-416px;width:1366px;height:730px"><div class="t" style="top:418.57px;font-size:13.5px;color:#1a1a1a;font-weight:normal;left:6.0px;transform:scaleX(0.8649);">13</div></div></div>
<div class="a" style="left:0px;top:434px;width:25px;height:17px;overflow:hidden"><div class="a" style="left:0px;top:-434px;width:1366px;height:730px"><div class="t" style="top:436.57px;font-size:13.5px;color:#1a1a1a;font-weight:normal;left:6.0px;transform:scaleX(0.8649);">14</div></div></div>
<div class="a" style="left:0px;top:452px;width:25px;height:18px;overflow:hidden"><div class="a" style="left:0px;top:-452px;width:1366px;height:730px"><div class="t" style="top:454.57px;font-size:13.5px;color:#1a1a1a;font-weight:normal;left:6.0px;transform:scaleX(0.8649);">15</div></div></div>
<div class="a" style="left:0px;top:471px;width:25px;height:18px;overflow:hidden"><div class="a" style="left:0px;top:-471px;width:1366px;height:730px"><div class="t" style="top:473.57px;font-size:13.5px;color:#1a1a1a;font-weight:normal;left:6.0px;transform:scaleX(0.8649);">16</div></div></div>
<div class="a" style="left:0px;top:490px;width:25px;height:18px;overflow:hidden"><div class="a" style="left:0px;top:-490px;width:1366px;height:730px"><div class="t" style="top:492.57px;font-size:13.5px;color:#1a1a1a;font-weight:normal;left:6.0px;transform:scaleX(0.8649);">17</div></div></div>
<div class="a" style="left:0px;top:509px;width:25px;height:18px;overflow:hidden"><div class="a" style="left:0px;top:-509px;width:1366px;height:730px"><div class="t" style="top:511.57px;font-size:13.5px;color:#1a1a1a;font-weight:normal;left:6.0px;transform:scaleX(0.8649);">18</div></div></div>
<div class="a" style="left:0px;top:528px;width:25px;height:18px;overflow:hidden"><div class="a" style="left:0px;top:-528px;width:1366px;height:730px"><div class="t" style="top:530.57px;font-size:13.5px;color:#1a1a1a;font-weight:normal;left:6.0px;transform:scaleX(0.8649);">19</div></div></div>
<div class="a" style="left:0px;top:547px;width:25px;height:18px;overflow:hidden"><div class="a" style="left:0px;top:-547px;width:1366px;height:730px"><div class="t" style="top:549.57px;font-size:13.5px;color:#1a1a1a;font-weight:normal;left:6.0px;transform:scaleX(0.8649);">20</div></div></div>
<div class="a" style="left:0px;top:566px;width:25px;height:18px;overflow:hidden"><div class="a" style="left:0px;top:-566px;width:1366px;height:730px"><div class="t" style="top:568.57px;font-size:13.5px;color:#1a1a1a;font-weight:normal;left:6.0px;transform:scaleX(0.8649);">21</div></div></div>
<div class="a" style="left:0px;top:585px;width:25px;height:18px;overflow:hidden"><div class="a" style="left:0px;top:-585px;width:1366px;height:730px"><div class="t" style="top:587.57px;font-size:13.5px;color:#1a1a1a;font-weight:normal;left:6.0px;transform:scaleX(0.8649);">22</div></div></div>
<div class="a" style="left:0px;top:604px;width:25px;height:18px;overflow:hidden"><div class="a" style="left:0px;top:-604px;width:1366px;height:730px"><div class="t" style="top:606.57px;font-size:13.5px;color:#1a1a1a;font-weight:normal;left:6.0px;transform:scaleX(0.8649);">23</div></div></div>
<div class="a" style="left:0px;top:623px;width:25px;height:18px;overflow:hidden"><div class="a" style="left:0px;top:-623px;width:1366px;height:730px"><div class="t" style="top:625.57px;font-size:13.5px;color:#1a1a1a;font-weight:normal;left:6.0px;transform:scaleX(0.8649);">24</div></div></div>
<div class="a" style="left:0px;top:642px;width:25px;height:18px;overflow:hidden"><div class="a" style="left:0px;top:-642px;width:1366px;height:730px"><div class="t" style="top:644.57px;font-size:13.5px;color:#1a1a1a;font-weight:normal;left:6.0px;transform:scaleX(0.8649);">25</div></div></div>
<div class="a" style="left:0px;top:661px;width:25px;height:17px;overflow:hidden"><div class="a" style="left:0px;top:-661px;width:1366px;height:730px"><div class="t" style="top:663.57px;font-size:13.5px;color:#1a1a1a;font-weight:normal;left:6.0px;transform:scaleX(0.8649);">26</div></div></div>
<div class="t" style="top:222.46px;font-size:16px;color:#000080;font-weight:bold;left:314.0px;transform:scaleX(0.9663);-webkit-text-stroke:0.12px #fff;">Entradas y Salidas</div>
<div class="t" style="top:247.84px;font-size:12px;color:#000;font-weight:bold;left:28.0px;transform:scaleX(0.9340);-webkit-text-stroke:0.12px #fff;">GOBIERNO PARROQUIAL VALLE HERMOSO</div>
<div class="t" style="top:266.84px;font-size:12px;color:#000;font-weight:bold;left:28.0px;transform:scaleX(1.0200);-webkit-text-stroke:0.12px #fff;">1768120600001</div>
<div class="t" style="top:285.84px;font-size:12px;color:#000080;font-weight:normal;left:36.2px;transform:scaleX(1.0695);-webkit-text-stroke:0.1px #fff;">16/6/2023</div>
<div class="t" style="top:285.84px;font-size:12px;color:#000080;font-weight:bold;left:99.0px;transform:scaleX(0.8713);-webkit-text-stroke:0.12px #fff;">FECHA DE REPORTE</div>
<div class="t" style="top:315.84px;font-size:12px;color:#000080;font-weight:bold;left:27.8px;transform:scaleX(0.8982);-webkit-text-stroke:0.12px #fff;">01</div>
<div class="t" style="top:315.84px;font-size:12px;color:#000080;font-weight:bold;left:99.0px;transform:scaleX(0.9809);-webkit-text-stroke:0.12px #fff;">ADMINISTRATIVO</div>
<div class="t" style="top:334.84px;font-size:12px;color:#000;font-weight:bold;left:27.8px;transform:scaleX(0.8982);-webkit-text-stroke:0.12px #fff;">02</div>
<div class="t" style="top:334.84px;font-size:12px;color:#000;font-weight:bold;left:99.0px;transform:scaleX(0.8939);-webkit-text-stroke:0.12px #fff;">AUXILIAR DE TESORERIA</div>
<div class="t" style="top:354.84px;font-size:12px;color:#000080;font-weight:bold;left:28.1px;transform:scaleX(0.9107);-webkit-text-stroke:0.12px #fff;">LOZADA GARCES ROSALBA MARIBEL</div>
<div class="t" style="top:379.84px;font-size:12px;color:#000;font-weight:bold;left:28.1px;transform:scaleX(0.9303);-webkit-text-stroke:0.12px #fff;">Turno</div>
<div class="t" style="top:379.84px;font-size:12px;color:#000;font-weight:bold;left:99.0px;transform:scaleX(0.9917);-webkit-text-stroke:0.12px #fff;">ADM</div>
<div class="t" style="top:379.84px;font-size:12px;color:#000;font-weight:bold;left:132.1px;transform:scaleX(0.9665);-webkit-text-stroke:0.12px #fff;">JORNADA UN</div>
<div class="t" style="top:418.84px;font-size:12px;color:#000;font-weight:bold;left:40.0px;transform:scaleX(1.0350);-webkit-text-stroke:0.12px #fff;">Fecha</div>
<div class="t" style="top:418.84px;font-size:12px;color:#000;font-weight:bold;left:143.5px;transform:scaleX(1.0523);-webkit-text-stroke:0.12px #fff;">Fecha</div>
<div class="t" style="top:418.84px;font-size:12px;color:#000;font-weight:bold;left:208.8px;transform:scaleX(0.8160);-webkit-text-stroke:0.12px #fff;">Ent.</div>
<div class="t" style="top:418.84px;font-size:12px;color:#000;font-weight:bold;left:246.1px;transform:scaleX(0.8989);-webkit-text-stroke:0.12px #fff;">Sal.</div>
<div class="t" style="top:418.84px;font-size:12px;color:#000;font-weight:bold;left:297.1px;transform:scaleX(0.9496);-webkit-text-stroke:0.12px #fff;">Horas</div>
<div class="t" style="top:418.84px;font-size:12px;color:#000;font-weight:bold;left:381.9px;transform:scaleX(0.9579);-webkit-text-stroke:0.12px #fff;">Día</div>
<div class="t" style="top:418.84px;font-size:12px;color:#000;font-weight:bold;left:542.0px;transform:scaleX(1.0239);-webkit-text-stroke:0.12px #fff;">Observaciones</div>
<div class="t" style="top:436.84px;font-size:12px;color:#000;font-weight:bold;left:39.0px;transform:scaleX(0.9622);-webkit-text-stroke:0.12px #fff;">Entrada</div>
<div class="t" style="top:436.84px;font-size:12px;color:#000;font-weight:bold;left:146.5px;transform:scaleX(1.0040);-webkit-text-stroke:0.12px #fff;">Salida</div>
<div class="t" style="top:436.84px;font-size:12px;color:#000;font-weight:bold;left:204.4px;transform:scaleX(0.9795);-webkit-text-stroke:0.12px #fff;">Trab.</div>
<div class="t" style="top:436.84px;font-size:12px;color:#000;font-weight:bold;left:243.3px;transform:scaleX(0.9865);-webkit-text-stroke:0.12px #fff;">Trab.</div>
<div class="t" style="top:436.84px;font-size:12px;color:#000;font-weight:bold;left:282.4px;transform:scaleX(1.0243);-webkit-text-stroke:0.12px #fff;">Trabajados</div>
<div class="t" style="top:454.84px;font-size:12px;color:#000;font-weight:normal;left:35.0px;transform:scaleX(1.1002);-webkit-text-stroke:0.1px #fff;">3/1/2023</div>
<div class="t" style="top:454.84px;font-size:12px;color:#000;font-weight:normal;left:139.0px;transform:scaleX(1.1002);-webkit-text-stroke:0.1px #fff;">3/1/2023</div>
<div class="t" style="top:454.84px;font-size:12px;color:#000;font-weight:normal;left:204.4px;transform:scaleX(1.0323);-webkit-text-stroke:0.1px #fff;">08:00</div>
<div class="t" style="top:454.84px;font-size:12px;color:#000;font-weight:normal;left:244.3px;transform:scaleX(0.9956);-webkit-text-stroke:0.1px #fff;">17:00</div>
<div class="t" style="top:454.84px;font-size:12px;color:#000;font-weight:normal;left:308.0px;transform:scaleX(0.9988);-webkit-text-stroke:0.1px #fff;">8:00:00</div>
<div class="t" style="top:454.84px;font-size:12px;color:#000;font-weight:normal;left:353.8px;transform:scaleX(0.8776);-webkit-text-stroke:0.1px #fff;">MARTES</div>
<div class="t" style="top:473.84px;font-size:12px;color:#000;font-weight:normal;left:35.0px;transform:scaleX(1.1002);-webkit-text-stroke:0.1px #fff;">4/1/2023</div>
<div class="t" style="top:473.84px;font-size:12px;color:#000;font-weight:normal;left:139.0px;transform:scaleX(1.1002);-webkit-text-stroke:0.1px #fff;">4/1/2023</div>
<div class="t" style="top:473.84px;font-size:12px;color:#000;font-weight:normal;left:204.4px;transform:scaleX(1.0323);-webkit-text-stroke:0.1px #fff;">07:59</div>
<div class="t" style="top:473.84px;font-size:12px;color:#000;font-weight:normal;left:244.3px;transform:scaleX(0.9956);-webkit-text-stroke:0.1px #fff;">17:01</div>
<div class="t" style="top:473.84px;font-size:12px;color:#000;font-weight:normal;left:308.0px;transform:scaleX(0.9988);-webkit-text-stroke:0.1px #fff;">8:02:00</div>
<div class="t" style="top:473.84px;font-size:12px;color:#000;font-weight:normal;left:353.8px;transform:scaleX(0.9096);-webkit-text-stroke:0.1px #fff;">MIÉRCOLES</div>
<div class="t" style="top:492.84px;font-size:12px;color:#000;font-weight:normal;left:35.0px;transform:scaleX(1.1002);-webkit-text-stroke:0.1px #fff;">5/1/2023</div>
<div class="t" style="top:492.84px;font-size:12px;color:#000;font-weight:normal;left:139.0px;transform:scaleX(1.1002);-webkit-text-stroke:0.1px #fff;">5/1/2023</div>
<div class="t" style="top:492.84px;font-size:12px;color:#000;font-weight:normal;left:204.4px;transform:scaleX(1.0323);-webkit-text-stroke:0.1px #fff;">07:58</div>
<div class="t" style="top:492.84px;font-size:12px;color:#000;font-weight:normal;left:244.3px;transform:scaleX(0.9956);-webkit-text-stroke:0.1px #fff;">17:00</div>
<div class="t" style="top:492.84px;font-size:12px;color:#000;font-weight:normal;left:308.0px;transform:scaleX(0.9988);-webkit-text-stroke:0.1px #fff;">8:02:00</div>
<div class="t" style="top:492.84px;font-size:12px;color:#000;font-weight:normal;left:353.8px;transform:scaleX(0.8718);-webkit-text-stroke:0.1px #fff;">JUEVES</div>
<div class="t" style="top:511.84px;font-size:12px;color:#000;font-weight:normal;left:35.0px;transform:scaleX(1.1002);-webkit-text-stroke:0.1px #fff;">6/1/2023</div>
<div class="t" style="top:511.84px;font-size:12px;color:#000;font-weight:normal;left:139.0px;transform:scaleX(1.1002);-webkit-text-stroke:0.1px #fff;">6/1/2023</div>
<div class="t" style="top:511.84px;font-size:12px;color:#000;font-weight:normal;left:207.4px;transform:scaleX(1.0317);-webkit-text-stroke:0.1px #fff;">8:00</div>
<div class="t" style="top:511.84px;font-size:12px;color:#000;font-weight:normal;left:244.3px;transform:scaleX(0.9956);-webkit-text-stroke:0.1px #fff;">17:00</div>
<div class="t" style="top:511.84px;font-size:12px;color:#000;font-weight:normal;left:308.0px;transform:scaleX(0.9988);-webkit-text-stroke:0.1px #fff;">8:00:00</div>
<div class="t" style="top:511.84px;font-size:12px;color:#000;font-weight:normal;left:353.8px;transform:scaleX(0.8674);-webkit-text-stroke:0.1px #fff;">VIERNES</div>
<div class="t" style="top:530.84px;font-size:12px;color:#000;font-weight:normal;left:35.0px;transform:scaleX(1.1002);-webkit-text-stroke:0.1px #fff;">9/1/2023</div>
<div class="t" style="top:530.84px;font-size:12px;color:#000;font-weight:normal;left:139.0px;transform:scaleX(1.1002);-webkit-text-stroke:0.1px #fff;">9/1/2023</div>
<div class="t" style="top:530.84px;font-size:12px;color:#000;font-weight:normal;left:204.4px;transform:scaleX(1.0323);-webkit-text-stroke:0.1px #fff;">07:58</div>
<div class="t" style="top:530.84px;font-size:12px;color:#000;font-weight:normal;left:244.3px;transform:scaleX(0.9956);-webkit-text-stroke:0.1px #fff;">17:03</div>
<div class="t" style="top:530.84px;font-size:12px;color:#000;font-weight:normal;left:308.0px;transform:scaleX(0.9988);-webkit-text-stroke:0.1px #fff;">8:05:00</div>
<div class="t" style="top:530.84px;font-size:12px;color:#000;font-weight:normal;left:353.8px;transform:scaleX(0.8672);-webkit-text-stroke:0.1px #fff;">LUNES</div>
<div class="t" style="top:549.84px;font-size:12px;color:#000;font-weight:normal;left:32.2px;transform:scaleX(1.0863);-webkit-text-stroke:0.1px #fff;">10/1/2023</div>
<div class="t" style="top:549.84px;font-size:12px;color:#000;font-weight:normal;left:136.3px;transform:scaleX(1.0863);-webkit-text-stroke:0.1px #fff;">10/1/2023</div>
<div class="t" style="top:549.84px;font-size:12px;color:#000;font-weight:normal;left:353.8px;transform:scaleX(0.8776);-webkit-text-stroke:0.1px #fff;">MARTES</div>
<div class="t" style="top:549.84px;font-size:12px;color:#000;font-weight:normal;left:434.0px;transform:scaleX(0.9985);-webkit-text-stroke:0.1px #fff;">PERMISO CON CARGO A VACACIONES</div>
<div class="t" style="top:568.84px;font-size:12px;color:#000;font-weight:normal;left:32.2px;transform:scaleX(1.1048);-webkit-text-stroke:0.1px #fff;">11/1/2023</div>
<div class="t" style="top:568.84px;font-size:12px;color:#000;font-weight:normal;left:136.3px;transform:scaleX(1.1048);-webkit-text-stroke:0.1px #fff;">11/1/2023</div>
<div class="t" style="top:568.84px;font-size:12px;color:#000;font-weight:normal;left:207.4px;transform:scaleX(1.0317);-webkit-text-stroke:0.1px #fff;">8:00</div>
<div class="t" style="top:568.84px;font-size:12px;color:#000;font-weight:normal;left:244.3px;transform:scaleX(0.9956);-webkit-text-stroke:0.1px #fff;">17:00</div>
<div class="t" style="top:568.84px;font-size:12px;color:#000;font-weight:normal;left:308.0px;transform:scaleX(0.9988);-webkit-text-stroke:0.1px #fff;">8:00:00</div>
<div class="t" style="top:568.84px;font-size:12px;color:#000;font-weight:normal;left:353.8px;transform:scaleX(0.9096);-webkit-text-stroke:0.1px #fff;">MIÉRCOLES</div>
<div class="t" style="top:587.84px;font-size:12px;color:#000;font-weight:normal;left:32.2px;transform:scaleX(1.0863);-webkit-text-stroke:0.1px #fff;">12/1/2023</div>
<div class="t" style="top:587.84px;font-size:12px;color:#000;font-weight:normal;left:136.3px;transform:scaleX(1.0863);-webkit-text-stroke:0.1px #fff;">12/1/2023</div>
<div class="t" style="top:587.84px;font-size:12px;color:#000;font-weight:normal;left:207.4px;transform:scaleX(1.0317);-webkit-text-stroke:0.1px #fff;">8:00</div>
<div class="t" style="top:587.84px;font-size:12px;color:#000;font-weight:normal;left:244.3px;transform:scaleX(0.9956);-webkit-text-stroke:0.1px #fff;">17:00</div>
<div class="t" style="top:587.84px;font-size:12px;color:#000;font-weight:normal;left:308.0px;transform:scaleX(0.9988);-webkit-text-stroke:0.1px #fff;">8:00:00</div>
<div class="t" style="top:587.84px;font-size:12px;color:#000;font-weight:normal;left:353.8px;transform:scaleX(0.8718);-webkit-text-stroke:0.1px #fff;">JUEVES</div>
<div class="t" style="top:606.84px;font-size:12px;color:#000;font-weight:normal;left:32.2px;transform:scaleX(1.0863);-webkit-text-stroke:0.1px #fff;">13/1/2023</div>
<div class="t" style="top:606.84px;font-size:12px;color:#000;font-weight:normal;left:136.3px;transform:scaleX(1.0863);-webkit-text-stroke:0.1px #fff;">13/1/2023</div>
<div class="t" style="top:606.84px;font-size:12px;color:#000;font-weight:normal;left:207.4px;transform:scaleX(1.0317);-webkit-text-stroke:0.1px #fff;">8:00</div>
<div class="t" style="top:606.84px;font-size:12px;color:#000;font-weight:normal;left:244.3px;transform:scaleX(0.9956);-webkit-text-stroke:0.1px #fff;">17:00</div>
<div class="t" style="top:606.84px;font-size:12px;color:#000;font-weight:normal;left:308.0px;transform:scaleX(0.9988);-webkit-text-stroke:0.1px #fff;">8:00:00</div>
<div class="t" style="top:606.84px;font-size:12px;color:#000;font-weight:normal;left:353.8px;transform:scaleX(0.8674);-webkit-text-stroke:0.1px #fff;">VIERNES</div>
<div class="t" style="top:625.84px;font-size:12px;color:#000;font-weight:normal;left:32.2px;transform:scaleX(1.0863);-webkit-text-stroke:0.1px #fff;">16/1/2023</div>
<div class="t" style="top:625.84px;font-size:12px;color:#000;font-weight:normal;left:136.3px;transform:scaleX(1.0863);-webkit-text-stroke:0.1px #fff;">16/1/2023</div>
<div class="t" style="top:625.84px;font-size:12px;color:#000;font-weight:normal;left:204.4px;transform:scaleX(1.0323);-webkit-text-stroke:0.1px #fff;">07:56</div>
<div class="t" style="top:625.84px;font-size:12px;color:#000;font-weight:normal;left:244.3px;transform:scaleX(0.9956);-webkit-text-stroke:0.1px #fff;">17:01</div>
<div class="t" style="top:625.84px;font-size:12px;color:#000;font-weight:normal;left:308.0px;transform:scaleX(0.9988);-webkit-text-stroke:0.1px #fff;">8:05:00</div>
<div class="t" style="top:625.84px;font-size:12px;color:#000;font-weight:normal;left:353.8px;transform:scaleX(0.8672);-webkit-text-stroke:0.1px #fff;">LUNES</div>
<div class="t" style="top:644.84px;font-size:12px;color:#000;font-weight:normal;left:32.2px;transform:scaleX(1.0863);-webkit-text-stroke:0.1px #fff;">17/1/2023</div>
<div class="t" style="top:644.84px;font-size:12px;color:#000;font-weight:normal;left:136.3px;transform:scaleX(1.0863);-webkit-text-stroke:0.1px #fff;">17/1/2023</div>
<div class="t" style="top:644.84px;font-size:12px;color:#000;font-weight:normal;left:204.4px;transform:scaleX(1.0323);-webkit-text-stroke:0.1px #fff;">07:59</div>
<div class="t" style="top:644.84px;font-size:12px;color:#000;font-weight:normal;left:244.3px;transform:scaleX(0.9956);-webkit-text-stroke:0.1px #fff;">17:00</div>
<div class="t" style="top:644.84px;font-size:12px;color:#000;font-weight:normal;left:308.0px;transform:scaleX(0.9988);-webkit-text-stroke:0.1px #fff;">8:01:00</div>
<div class="t" style="top:644.84px;font-size:12px;color:#000;font-weight:normal;left:353.8px;transform:scaleX(0.8776);-webkit-text-stroke:0.1px #fff;">MARTES</div>
<div class="t" style="top:663.84px;font-size:12px;color:#000;font-weight:normal;left:32.2px;transform:scaleX(1.0863);-webkit-text-stroke:0.1px #fff;">18/1/2023</div>
<div class="t" style="top:663.84px;font-size:12px;color:#000;font-weight:normal;left:136.3px;transform:scaleX(1.0863);-webkit-text-stroke:0.1px #fff;">18/1/2023</div>
<div class="t" style="top:663.84px;font-size:12px;color:#000;font-weight:normal;left:353.8px;transform:scaleX(0.9096);-webkit-text-stroke:0.1px #fff;">MIÉRCOLES</div>
<div class="t" style="top:663.84px;font-size:12px;color:#000;font-weight:normal;left:434.0px;transform:scaleX(0.9985);-webkit-text-stroke:0.1px #fff;">PERMISO CON CARGO A VACACIONES</div>
<div class="a" style="left:1345px;top:203px;width:21px;height:475px;background:#e6e6e6"></div>
<div class="a" style="left:1347px;top:205px;width:17px;height:473px;background:#f0f0f0"></div>
<div class="a" style="left:1348px;top:205px;width:15px;height:15px;background:#fff;border:1px solid #a0a0a0"></div>
<div class="a" style="left:1348px;top:220px;width:15px;height:17px;background:#fff;border:1px solid #a0a0a0"></div>
<div class="a" style="left:1348px;top:664px;width:15px;height:15px;background:#fff;border:1px solid #a0a0a0"></div>
<svg class="s" style="left:0;top:0" width="1366" height="730" viewBox="0 0 1366 730"><path d="M1352 214h7.5l-3.75-4z" fill="#222"/><path d="M1352 669h7.5l-3.75 4z" fill="#222"/></svg>
<div class="a" style="left:0px;top:678px;width:1366px;height:28px;background:#e6e6e6"></div>
<div class="a" style="left:0px;top:678px;width:1345px;height:1px;background:#a0a0a0"></div>
<div class="a" style="left:100px;top:678px;width:136px;height:25px;background:#fff"></div>
<div class="a" style="left:100px;top:678px;width:1px;height:25px;background:#a0a0a0"></div>
<div class="a" style="left:235px;top:678px;width:1px;height:25px;background:#a0a0a0"></div>
<div class="a" style="left:100px;top:701px;width:136px;height:2px;background:#217346"></div>
<div class="t" style="top:685.00px;font-size:13px;color:#217346;font-weight:bold;left:111.5px;transform:scaleX(0.9600);">Entradas y Salidas</div>
<div class="t" style="top:685.00px;font-size:13px;color:#444;font-weight:normal;left:247.5px;transform:scaleX(0.9715);">Hoja1</div>
<div class="a" style="left:294px;top:682px;width:1px;height:21px;background:#a8a8a8"></div>
<svg class="s" style="left:0;top:0" width="1366" height="730" viewBox="0 0 1366 730"><path d="M31 688l-4 4 4 4z" fill="#b4b4b4"/><path d="M56 688l4 4-4 4z" fill="#b4b4b4"/><circle cx="336" cy="692" r="7" fill="none" stroke="#707070" stroke-width="1.2"/><path d="M332 692h8M336 688v8" stroke="#707070" stroke-width="1.4"/><rect x="819" y="687" width="2" height="2" fill="#a0a0a0"/><rect x="819" y="691" width="2" height="2" fill="#a0a0a0"/><rect x="819" y="695" width="2" height="2" fill="#a0a0a0"/></svg>
<div class="a" style="left:836px;top:685px;width:509px;height:15px;background:#f0f0f0"></div>
<div class="a" style="left:836px;top:685px;width:15px;height:15px;background:#fff;border:1px solid #a0a0a0"></div>
<div class="a" style="left:850px;top:685px;width:306px;height:15px;background:#fff;border:1px solid #a0a0a0"></div>
<div class="a" style="left:1330px;top:685px;width:15px;height:15px;background:#fff;border:1px solid #a0a0a0"></div>
<svg class="s" style="left:0;top:0" width="1366" height="730" viewBox="0 0 1366 730"><path d="M846 688.5v7.5l-4-3.75z" fill="#222"/><path d="M1335 688.5v7.5l4-3.75z" fill="#222"/></svg>
<div class="a" style="left:0px;top:706px;width:1366px;height:1px;background:#d4d4d4"></div>
<div class="a" style="left:0px;top:707px;width:1366px;height:21px;background:#f3f3f3"></div>
<div class="a" style="left:0px;top:728px;width:1366px;height:2px;background:#262a2e"></div>
<div class="t" style="top:711.84px;font-size:12px;color:#333;font-weight:normal;left:7.0px;transform:scaleX(0.9070);">Listo</div>
<svg class="s" style="left:0;top:0" width="1366" height="730" viewBox="0 0 1366 730"><path d="M54.5 711.6A5.6 5.6 0 0 0 50.3 715.6M50.2 717.6A5.6 5.6 0 0 0 55.6 722.6" fill="none" stroke="#3a3a3a" stroke-width="1.2"/><path d="M56.4 710v6.3M54.7 714.6l1.7 1.8 1.7-1.8M56.4 715.8h6M61 713.8l1.8 2-1.8 2" fill="none" stroke="#3a3a3a" stroke-width="1.1"/><path d="M57.6 717.6l7.8 7.2M65.4 718l-7.8 6.8" stroke="#3a3a3a" stroke-width="1.7"/></svg>
<div class="t" style="top:711.84px;font-size:12px;color:#333;font-weight:normal;left:69.0px;transform:scaleX(0.9452);">Accesibilidad: es necesario investigar</div>
<div class="t" style="top:711.84px;font-size:12px;color:#333;font-weight:normal;left:765.0px;transform:scaleX(0.9334);">Promedio: 24/2/1941</div>
<div class="t" style="top:711.84px;font-size:12px;color:#333;font-weight:normal;left:886.0px;transform:scaleX(0.9348);">Recuento: 8</div>
<div class="t" style="top:711.84px;font-size:12px;color:#333;font-weight:normal;left:962.5px;transform:scaleX(0.9190);">Suma: 2/12/2146</div>
<div class="a" style="left:1066px;top:707px;width:40px;height:21px;background:#c8c8c8"></div>
<svg class="s" style="left:0;top:0" width="1366" height="730" viewBox="0 0 1366 730"><rect x="1079.5" y="710.5" width="12" height="12" fill="none" stroke="#666"/><path d="M1083.5 710.5v12M1087.5 710.5v12M1079.5 714.5h12M1079.5 718.5h12" stroke="#666"/><rect x="1119.5" y="710.5" width="13" height="12" fill="none" stroke="#666"/><rect x="1121.5" y="712.5" width="9" height="8" fill="none" stroke="#666"/><path d="M1123 714.5h6M1123 716.5h6M1123 718.5h6" stroke="#666" stroke-width="0.8"/><path d="M1159.5 722.5v-12h13v12M1159.5 717.5h7.5v-7M1167.5 710.5v7M1172.5 717.5h-5" fill="none" stroke="#666"/><rect x="1192" y="717" width="8" height="1" fill="#444"/><rect x="1205" y="717" width="100" height="1" fill="#444"/><rect x="1253" y="712" width="5" height="11" fill="#444"/><rect x="1310" y="717" width="8" height="1" fill="#444"/><rect x="1313.5" y="713" width="1" height="9" fill="#444"/></svg>
<div class="t" style="top:711.84px;font-size:12px;color:#333;font-weight:normal;left:1331.0px;transform:scaleX(0.8631);">100%</div></body></html>
